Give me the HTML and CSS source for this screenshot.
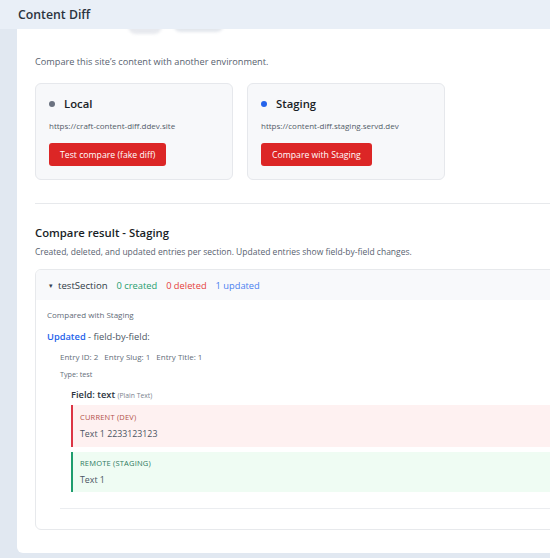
FILE: index.html
```html
<!DOCTYPE html>
<html>
<head>
<meta charset="utf-8">
<link rel="stylesheet" href="styles.css">
</head>
<body>
<div class="shell">
  <header class="topbar"><span class="topbar-title">Content Diff</span></header>
  <main class="panel">
    <div class="tabs"><span class="tab tab-a"></span><span class="tab tab-b"></span></div>
    <p class="intro">Compare this site’s content with another environment.</p>
    <div class="cards">
      <div class="card">
        <div class="card-title"><span class="dot dot-gray"></span>Local</div>
        <div class="card-url">https://craft-content-diff.ddev.site</div>
        <button class="btn">Test compare (fake diff)</button>
      </div>
      <div class="card">
        <div class="card-title"><span class="dot dot-blue"></span>Staging</div>
        <div class="card-url">https://content-diff.staging.servd.dev</div>
        <button class="btn">Compare with Staging</button>
      </div>
    </div>
    <hr class="divider">
    <h2 class="result-title">Compare result - Staging</h2>
    <p class="result-sub">Created, deleted, and updated entries per section. Updated entries show field-by-field changes.</p>
    <section class="result">
      <div class="result-head">
        <span class="caret">▾</span>
        <span class="section-name">testSection</span>
        <span class="stat stat-created">0 created</span>
        <span class="stat stat-deleted">0 deleted</span>
        <span class="stat stat-updated">1 updated</span>
      </div>
      <div class="result-body">
        <div class="compared">Compared with Staging</div>
        <div class="updated-line"><strong class="updated">Updated</strong> - field-by-field:</div>
        <div class="entry">
          <div class="entry-meta"><span>Entry ID: 2</span><span>Entry Slug: 1</span><span>Entry Title: 1</span></div>
          <div class="entry-type">Type: test</div>
          <div class="field">
            <div class="field-name"><strong>Field: text</strong> <span class="field-kind">(Plain Text)</span></div>
            <div class="val val-current">
              <div class="val-label">CURRENT (DEV)</div>
              <div class="val-text">Text 1 2233123123</div>
            </div>
            <div class="val val-remote">
              <div class="val-label">REMOTE (STAGING)</div>
              <div class="val-text">Text 1</div>
            </div>
          </div>
        </div>
      </div>
    </section>
  </main>
</div>
</body>
</html>
```

FILE: styles.css
```css
* { box-sizing: border-box; }
html, body { margin: 0; padding: 0; }
body {
  background: #e1e8f1;
  font-family: "Open Sans", "Noto Sans", Arial, sans-serif;
  color: #1f2937;
  overflow: hidden;
  width: 550px;
  height: 558px;
}
.shell {
  position: relative;
  padding: 0 0 5px 17px;
  overflow: hidden;
}
.topbar {
  position: absolute;
  top: 0; left: 0; right: 0;
  height: 29px;
  background: #e9eff7;
  z-index: 2;
  display: flex;
  align-items: center;
  padding-left: 18px;
}
.topbar-title {
  font-size: 12.3px;
  font-weight: 600;
  color: #2b3440;
}
.panel {
  width: 720px;
  background: #fff;
  border-radius: 0 0 0 6px;
  padding: 0 0 25px 18px;
  height: 553px;
}
.tabs {
  display: flex;
  align-items: flex-start;
  padding-top: 12px;
  margin-left: 93px;
  gap: 11px;
  height: 34px;
}
.tab {
  display: block;
  border-radius: 8px;
  background: #e7e9ee;
  filter: blur(1.5px);
}
.tab-a { width: 34px; height: 22px; }
.tab-b { width: 51px; height: 20px; background: #e2e6ec; }
.intro {
  margin: 21px 0 0;
  font-size: 9.2px;
  line-height: 14px;
  color: #58626f;
}
.cards {
  display: flex;
  gap: 14px;
  margin-top: 14px;
}
.card {
  width: 198px;
  height: 97px;
  background: #f7f8fa;
  border: 1px solid #e6e8ec;
  border-radius: 6px;
  padding: 12px 12px 0 13px;
}
.card-title {
  display: flex;
  align-items: center;
  font-size: 11.3px;
  font-weight: 600;
  line-height: 16px;
  color: #1a1f27;
}
.dot {
  width: 6px; height: 6px; border-radius: 50%;
  margin-right: 9px;
}
.dot-gray { background: #6b7280; }
.dot-blue { background: #2563eb; }
.card-url {
  margin-top: 8px;
  font-size: 8px;
  line-height: 12px;
  color: #525c68;
}
.btn {
  margin-top: 11px;
  height: 23px;
  padding: 0 11px;
  border: none;
  border-radius: 3px;
  background: #dc2626;
  color: #fff;
  font-family: inherit;
  font-size: 8.7px;
}
.divider {
  margin: 23px 0 0;
  border: 0;
  border-top: 1px solid #e7e9ec;
}
.result-title {
  margin: 21px 0 0;
  font-size: 11.3px;
  line-height: 16px;
  font-weight: 600;
  color: #1a1f27;
}
.result-sub {
  margin: 4px 0 0;
  font-size: 8.5px;
  line-height: 13px;
  color: #58626f;
}
.result {
  margin-top: 11px;
  border: 1px solid #e7e9ec;
  border-radius: 6px;
  overflow: hidden;
}
.result-head {
  height: 30px;
  background: #f8f9fb;
  display: flex;
  align-items: center;
  padding-left: 13px;
  font-size: 9.3px;
}
.caret { font-size: 7px; color: #374151; margin-right: 5px; }
.section-name { color: #2f3946; font-weight: 500; margin-right: 9px; font-size: 9.6px; }
.stat { margin-right: 9px; }
.stat-created { color: #1f9d6e; }
.stat-deleted { color: #e5413b; }
.stat-updated { color: #4a7ff0; }
.result-body {
  padding: 9px 0 20px 11px;
}
.compared {
  font-size: 8px;
  line-height: 12px;
  color: #616b77;
}
.updated-line {
  margin-top: 9px;
  font-size: 9.3px;
  line-height: 14px;
  color: #4b5563;
}
.updated { color: #2563eb; font-weight: 600; }
.entry {
  margin-left: 13px;
  padding-bottom: 16px;
  border-bottom: 1px solid #ebedf0;
}
.entry-meta {
  margin-top: 7px;
  font-size: 8px;
  line-height: 12px;
  color: #646e7a;
  display: flex;
  gap: 6px;
}
.entry-type {
  margin-top: 6px;
  font-size: 7.2px;
  line-height: 11px;
  color: #646e7a;
}
.field {
  margin-left: 11px;
  margin-top: 8px;
}
.field-name {
  font-size: 9.3px;
  line-height: 14px;
  color: #2b3440;
}
.field-name strong { font-weight: 600; }
.field-kind { font-size: 6.8px; color: #7a838e; }
.val {
  border-left: 2px solid;
  padding: 7px 0 6px 7px;
  margin-top: 2px;
}
.val + .val { margin-top: 5px; }
.val-current { background: #fef1f1; border-color: #dc3545; height: 42px; }
.val-remote { background: #effcf3; border-color: #1f9d6e; height: 40px; padding-top: 6px; }
.val-label {
  font-size: 7.5px;
  line-height: 11px;
  letter-spacing: 0.2px;
}
.val-current .val-label { color: #b3524a; }
.val-remote .val-label { color: #2e7a5f; }
.val-text {
  margin-top: 5px;
  font-size: 8.8px;
  line-height: 12px;
  color: #4b5563;
}
```
